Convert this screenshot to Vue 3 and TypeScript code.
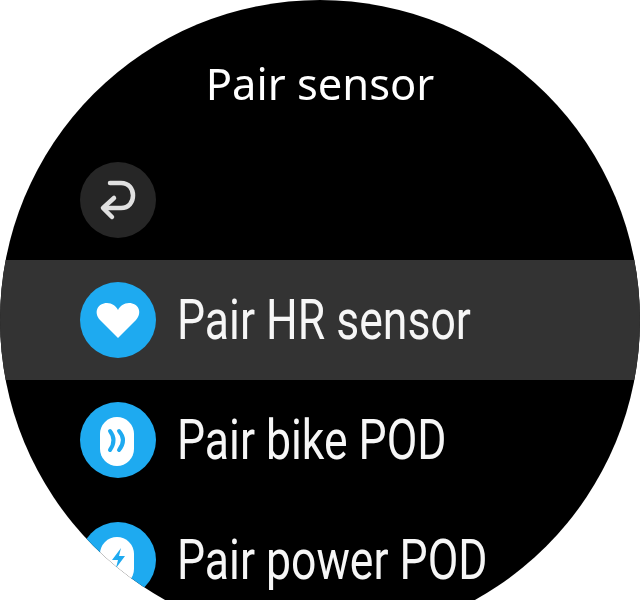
<script setup lang="ts">
interface SensorRow {
  label: string;
  kind: 'heart' | 'bike' | 'power';
  active?: boolean;
}

const rows: SensorRow[] = [
  { label: 'Pair HR sensor', kind: 'heart', active: true },
  { label: 'Pair bike POD', kind: 'bike' },
  { label: 'Pair power POD', kind: 'power' }
];
</script>

<template>
  <div class="screen">
    <div class="watch">
      <h1 class="title">Pair sensor</h1>
      <div class="row">
        <span class="icon back">
          <svg viewBox="0 0 76 76" width="76" height="76" fill="none" stroke="#e0e0e0" stroke-width="4.500" stroke-linecap="round" stroke-linejoin="round">
            <path d="M30 21H41C49 21 53 27 53 33.500C53 40 49 46 41 46H24" />
            <path d="M34 36L23 46L32 55" />
          </svg>
        </span>
      </div>
      <div v-for="row in rows" :key="row.label" class="row" :class="{ active: row.active }">
        <span class="icon blue">
          <svg viewBox="0 0 76 76" width="76" height="76">
            <path v-if="row.kind === 'heart'" fill="#fff" d="M38 56L20 38C13 30 18 21 27 21C32 21 36 24 38 28C40 24 44 21 49 21C58 21 63 30 56 38Z" />
            <template v-else>
              <rect x="20" y="15" width="34" height="49" rx="17" fill="#fff" />
              <g v-if="row.kind === 'bike'" fill="none" stroke="#1eaaf0" stroke-width="4" stroke-linecap="round">
                <path d="M30 29Q37 38 30 48" />
                <path d="M39 29Q47 38 39 48" />
              </g>
              <path v-else fill="#1eaaf0" d="M41 26L32 38H38L36 46L45 34H39Z" />
            </template>
          </svg>
        </span>
        <span class="label">{{ row.label }}</span>
      </div>
    </div>
  </div>
</template>

<style scoped>
.screen {
  width: 640px;
  height: 600px;
  background: #fff;
  overflow: hidden;
}

.watch {
  width: 640px;
  height: 640px;
  border-radius: 50%;
  background: #000;
  overflow: hidden;
  display: flex;
  flex-direction: column;
}

.title {
  height: 140px;
  margin: 0;
  padding-top: 54px;
  box-sizing: border-box;
  flex: none;
  text-align: center;
  color: #fff;
  font-family: "Noto Sans", sans-serif;
  font-size: 43.500px;
  line-height: 58px;
  font-weight: 400;
  filter: blur(0.5px);
}

.row {
  height: 120px;
  flex: none;
  display: flex;
  align-items: center;
  gap: 21px;
  padding-left: 80px;
}

.row.active {
  background: #333;
}

.icon {
  width: 76px;
  height: 76px;
  flex: none;
  border-radius: 50%;
  filter: blur(0.6px);
}

.icon svg {
  display: block;
}

.back {
  background: #262626;
}

.blue {
  background: #1eaaf0;
}

.label {
  color: #f6f6f6;
  font-family: Roboto, sans-serif;
  font-size: 56px;
  line-height: 64px;
  white-space: nowrap;
  transform: scaleX(0.795);
  transform-origin: left center;
  filter: blur(0.6px);
}
</style>
